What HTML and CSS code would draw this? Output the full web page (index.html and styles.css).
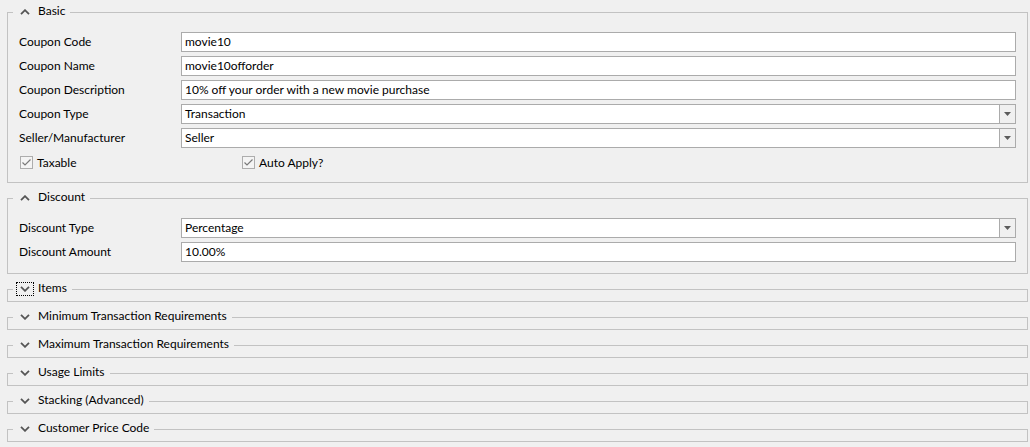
FILE: index.html
```html
<!DOCTYPE html>
<html lang="en">
<head>
<meta charset="utf-8">
<title>Coupon</title>
<link rel="stylesheet" href="styles.css">
</head>
<body>
<div class="panel">

  <section class="group">
    <div class="group-head">
      <span class="stub"></span>
      <span class="toggle"><svg class="chev" width="10" height="6" viewBox="0 0 10 6"><path d="M1 5.2 L5 1.2 L9 5.2"/></svg></span>
      <span class="title">Basic</span>
      <span class="rule"></span>
    </div>
    <div class="group-body">
      <div class="field"><span class="label">Coupon Code</span><div class="input">movie10</div></div>
      <div class="field"><span class="label">Coupon Name</span><div class="input">movie10offorder</div></div>
      <div class="field"><span class="label">Coupon Description</span><div class="input">10% off your order with a new movie purchase</div></div>
      <div class="field"><span class="label">Coupon Type</span><div class="input select"><span class="value">Transaction</span><span class="drop"><svg width="7" height="4" viewBox="0 0 7 4"><polygon points="0,0 7,0 3.5,4"/></svg></span></div></div>
      <div class="field"><span class="label">Seller/Manufacturer</span><div class="input select"><span class="value">Seller</span><span class="drop"><svg width="7" height="4" viewBox="0 0 7 4"><polygon points="0,0 7,0 3.5,4"/></svg></span></div></div>
      <div class="checks">
        <label class="check first"><span class="box"><svg width="11" height="11" viewBox="0 0 11 11"><path d="M1.5 5.5 L4 8 L9.5 2.5"/></svg></span>Taxable</label>
        <label class="check"><span class="box"><svg width="11" height="11" viewBox="0 0 11 11"><path d="M1.5 5.5 L4 8 L9.5 2.5"/></svg></span>Auto Apply?</label>
      </div>
    </div>
  </section>

  <section class="group discount">
    <div class="group-head">
      <span class="stub"></span>
      <span class="toggle"><svg class="chev" width="10" height="6" viewBox="0 0 10 6"><path d="M1 5.2 L5 1.2 L9 5.2"/></svg></span>
      <span class="title">Discount</span>
      <span class="rule"></span>
    </div>
    <div class="group-body">
      <div class="field"><span class="label">Discount Type</span><div class="input select"><span class="value">Percentage</span><span class="drop"><svg width="7" height="4" viewBox="0 0 7 4"><polygon points="0,0 7,0 3.5,4"/></svg></span></div></div>
      <div class="field"><span class="label">Discount Amount</span><div class="input">10.00%</div></div>
    </div>
  </section>

  <section class="group collapsed">
    <div class="group-head">
      <span class="stub"></span>
      <span class="toggle"><span class="focus"><svg class="chev" width="10" height="6" viewBox="0 0 10 6"><path d="M1 0.8 L5 4.8 L9 0.8"/></svg></span></span>
      <span class="title">Items</span>
      <span class="rule"></span>
    </div>
    <div class="group-body"></div>
  </section>

  <section class="group collapsed">
    <div class="group-head">
      <span class="stub"></span>
      <span class="toggle"><svg class="chev" width="10" height="6" viewBox="0 0 10 6"><path d="M1 0.8 L5 4.8 L9 0.8"/></svg></span>
      <span class="title">Minimum Transaction Requirements</span>
      <span class="rule"></span>
    </div>
    <div class="group-body"></div>
  </section>

  <section class="group collapsed">
    <div class="group-head">
      <span class="stub"></span>
      <span class="toggle"><svg class="chev" width="10" height="6" viewBox="0 0 10 6"><path d="M1 0.8 L5 4.8 L9 0.8"/></svg></span>
      <span class="title">Maximum Transaction Requirements</span>
      <span class="rule"></span>
    </div>
    <div class="group-body"></div>
  </section>

  <section class="group collapsed">
    <div class="group-head">
      <span class="stub"></span>
      <span class="toggle"><svg class="chev" width="10" height="6" viewBox="0 0 10 6"><path d="M1 0.8 L5 4.8 L9 0.8"/></svg></span>
      <span class="title">Usage Limits</span>
      <span class="rule"></span>
    </div>
    <div class="group-body"></div>
  </section>

  <section class="group collapsed">
    <div class="group-head">
      <span class="stub"></span>
      <span class="toggle"><svg class="chev" width="10" height="6" viewBox="0 0 10 6"><path d="M1 0.8 L5 4.8 L9 0.8"/></svg></span>
      <span class="title">Stacking (Advanced)</span>
      <span class="rule"></span>
    </div>
    <div class="group-body"></div>
  </section>

  <section class="group collapsed">
    <div class="group-head">
      <span class="stub"></span>
      <span class="toggle"><svg class="chev" width="10" height="6" viewBox="0 0 10 6"><path d="M1 0.8 L5 4.8 L9 0.8"/></svg></span>
      <span class="title">Customer Price Code</span>
      <span class="rule"></span>
    </div>
    <div class="group-body"></div>
  </section>

</div>
</body>
</html>
```

FILE: styles.css
```css
html, body {
  margin: 0;
  background: #f0f0f0;
}

body {
  font-family: "Segoe UI", Lato, "Noto Sans", sans-serif;
  font-size: 12px;
  color: #000;
}

.panel {
  padding: 0 2px 0 7px;
}

.group + .group {
  margin-top: 3px;
}

.group-head {
  display: flex;
  height: 24px;
}

.stub {
  width: 6px;
  height: 12px;
  align-self: flex-end;
  box-sizing: border-box;
  border-top: 1px solid #c2c2c2;
  border-left: 1px solid #c2c2c2;
}

.toggle {
  width: 24px;
  display: flex;
  align-items: center;
  justify-content: center;
}

.chev path {
  fill: none;
  stroke: #555;
  stroke-width: 1.8;
}

.focus {
  width: 18px;
  height: 14px;
  box-sizing: border-box;
  border: 1px dotted #000;
  display: flex;
  align-items: center;
  justify-content: center;
}

.title {
  margin-left: 1px;
  padding-right: 5px;
  line-height: 22px;
  align-self: flex-start;
  white-space: nowrap;
}

.rule {
  flex: 1;
  height: 12px;
  align-self: flex-end;
  box-sizing: border-box;
  border-top: 1px solid #c2c2c2;
  border-right: 1px solid #c2c2c2;
}

.group-body {
  display: flex;
  flex-direction: column;
  gap: 4px;
  padding: 8px 11px 10px;
  border: 1px solid #c2c2c2;
  border-top: none;
}

.discount .group-body {
  padding-bottom: 11px;
}

.collapsed .group-body {
  padding: 0;
}

.field {
  display: flex;
  height: 20px;
}

.label {
  width: 162px;
  line-height: 20px;
  white-space: nowrap;
}

.input {
  flex: 1;
  display: flex;
  box-sizing: border-box;
  height: 20px;
  padding: 0 3px;
  border: 1px solid #ababab;
  background: #fff;
  line-height: 18px;
  white-space: nowrap;
}

.select .value {
  flex: 1;
}

.drop {
  width: 16px;
  height: 18px;
  margin-right: -3px;
  box-sizing: border-box;
  border-left: 1px solid #ababab;
  background: #f0f0f0;
  display: flex;
  align-items: center;
  justify-content: center;
}

.drop polygon {
  fill: #5c5c5c;
}

.checks {
  display: flex;
  height: 20px;
  align-items: center;
}

.check {
  display: flex;
  align-items: center;
  gap: 4px;
  margin-left: 1px;
}

.check.first {
  width: 221px;
}

.box {
  width: 13px;
  height: 13px;
  box-sizing: border-box;
  border: 1px solid #adadad;
  background: #f4f4f4;
  display: flex;
  align-items: center;
  justify-content: center;
}

.box path {
  fill: none;
  stroke: #7a7a7a;
  stroke-width: 1.2;
}
```
